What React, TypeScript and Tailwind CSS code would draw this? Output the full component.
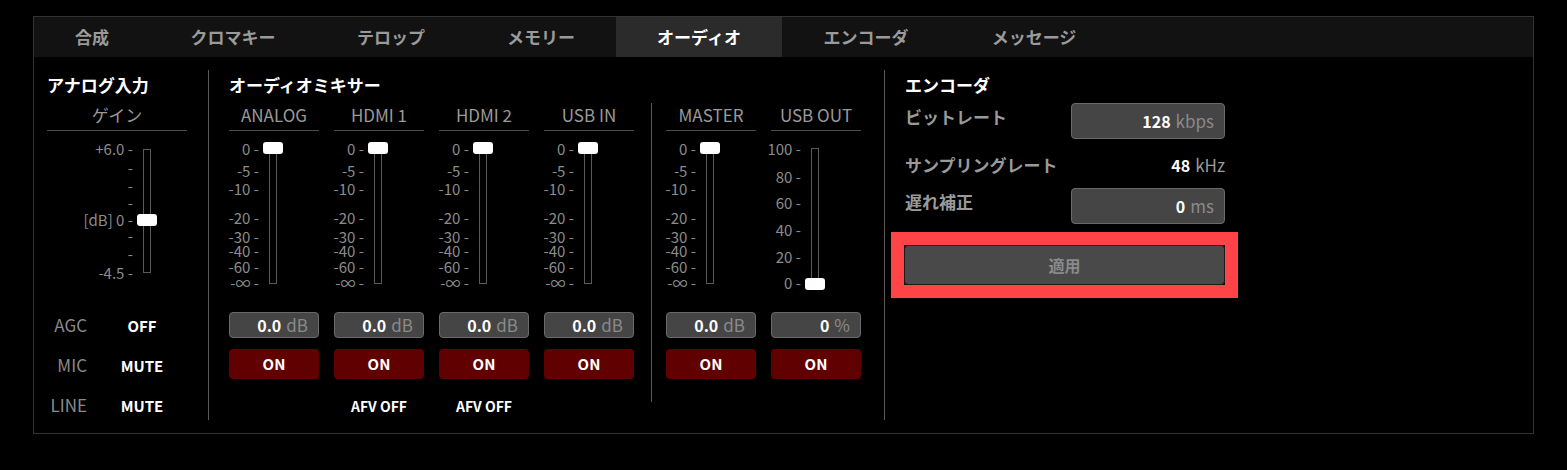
import React from "react";

type Mark = { t: string; y: number };

const TOP = 131; // page y of fader box top

const DB_MARKS: Mark[] = [
  { t: "0", y: 149 },
  { t: "-5", y: 171 },
  { t: "-10", y: 189 },
  { t: "-20", y: 218 },
  { t: "-30", y: 237 },
  { t: "-40", y: 251 },
  { t: "-60", y: 267 },
  { t: "-∞", y: 283 },
];

const PCT_MARKS: Mark[] = [
  { t: "100", y: 149 },
  { t: "80", y: 177 },
  { t: "60", y: 203 },
  { t: "40", y: 230 },
  { t: "20", y: 257 },
  { t: "0", y: 283 },
];

const GAIN_MARKS: Mark[] = [
  { t: "+6.0 -", y: 149 },
  { t: "-", y: 168 },
  { t: "-", y: 186 },
  { t: "-", y: 203 },
  { t: "[dB] 0 -", y: 220 },
  { t: "-", y: 236 },
  { t: "-", y: 254 },
  { t: "-4.5 -", y: 273 },
];

const TABS = [
  { label: "合成", w: "w-[116px]" },
  { label: "クロマキー", w: "w-[166px]" },
  { label: "テロップ", w: "w-[150px]" },
  { label: "メモリー", w: "w-[150px]" },
  { label: "オーディオ", w: "w-[166px]", active: true },
  { label: "エンコーダ", w: "w-[168px]" },
  { label: "メッセージ", w: "w-[168px]" },
];

function Fader({
  width,
  dashX,
  trackX,
  trackTop,
  trackBottom,
  thumbY,
  marks,
}: {
  width: number;
  dashX: number;
  trackX: number;
  trackTop: number;
  trackBottom: number;
  thumbY: number;
  marks: Mark[];
}) {
  return (
    <div className="relative h-[170px]" style={{ width }}>
      {marks.map((m, i) => (
        <span
          key={i}
          className="absolute whitespace-nowrap text-right text-[15px] leading-[13px] text-[#8c8c8c]"
          style={{ right: width - dashX, top: m.y - TOP - 7 }}
        >
          {m.t}
        </span>
      ))}
      <div
        className="absolute w-[8px] border border-[#5a5a5a] bg-black"
        style={{ left: trackX, top: trackTop - TOP, height: trackBottom - trackTop }}
      />
      <div
        className="absolute h-[12px] w-[20px] rounded-[3px] bg-white"
        style={{ left: trackX - 6, top: thumbY - TOP - 6 }}
      />
    </div>
  );
}

function Header({ children }: { children: React.ReactNode }) {
  return (
    <div className="flex h-[27px] items-center justify-center border-b border-[#4a4a4a] pb-[4px] text-[17px] text-[#9a9a9a]">
      {children}
    </div>
  );
}

function Channel({
  name,
  marks,
  thumbY,
  value,
  unit,
  afv,
}: {
  name: string;
  marks: Mark[];
  thumbY: number;
  value: string;
  unit: string;
  afv?: boolean;
}) {
  return (
    <div className="flex w-[90px] flex-col">
      <Header>{name}</Header>
      <Fader
        width={90}
        dashX={30}
        trackX={40}
        trackTop={148}
        trackBottom={284}
        thumbY={thumbY}
        marks={marks.map((m) => ({ t: `${m.t} -`, y: m.y }))}
      />
      <div className="mt-[11px] flex h-[26px] items-center justify-end gap-[5px] rounded-[4px] border border-[#6a6a6a] bg-[#454545] pr-[10px]">
        <span className="text-[16px] font-bold text-white">{value}</span>
        <span className="text-[17px] text-[#8a8a8a]">{unit}</span>
      </div>
      <button className="mt-[11px] flex h-[30px] items-center justify-center rounded-[4px] bg-[#610000] text-[15px] font-bold text-white">
        ON
      </button>
      {afv ? (
        <div className="mt-[17px] text-center text-[14px] font-bold leading-5 text-white">AFV OFF</div>
      ) : null}
    </div>
  );
}

function Divider() {
  return <div className="h-[350px] w-px shrink-0 bg-[#5a5a5a]" />;
}

export default function App() {
  return (
    <div className="h-[470px] w-full bg-black pl-[33px] pt-4 font-['Noto_Sans_CJK_JP','Noto_Sans',sans-serif]">
      <div className="h-[418px] w-[1501px] border border-[#333]">
        <div className="flex h-10 bg-[#121212]">
          {TABS.map((t) => (
            <div
              key={t.label}
              className={`flex items-center justify-center text-[17px] font-bold ${t.w} ${
                t.active ? "bg-[#2b2b2b] text-white" : "text-[#9a9a9a]"
              }`}
            >
              {t.label}
            </div>
          ))}
        </div>

        <div className="flex pt-[13px]">
          {/* analog input */}
          <section className="w-[174px] shrink-0 pl-[13px]">
            <div className="w-[140px]">
              <h3 className="mt-[3px] text-[17px] font-bold leading-6 text-white">アナログ入力</h3>
              <div className="mt-[7px]">
                <Header>ゲイン</Header>
              </div>
              <Fader width={140} dashX={86} trackX={96} trackTop={149} trackBottom={273} thumbY={220} marks={GAIN_MARKS} />
              {[
                ["AGC", "OFF"],
                ["MIC", "MUTE"],
                ["LINE", "MUTE"],
              ].map(([k, v], i) => (
                <div key={k} className={`flex h-[40px] items-center ${i === 0 ? "mt-[4px]" : ""}`}>
                  <span className="w-[40px] text-right text-[17px] text-[#8a8a8a]">{k}</span>
                  <span className="ml-[20px] mt-[3px] w-[70px] text-center text-[15px] font-bold text-white">{v}</span>
                </div>
              ))}
            </div>
          </section>

          <Divider />

          {/* mixer */}
          <section className="w-[675px] shrink-0 pl-[20px]">
            <h3 className="mt-[3px] text-[17px] font-bold leading-6 text-white">オーディオミキサー</h3>
            <div className="mt-[7px] flex items-start">
              <div className="flex gap-[15px]">
                <Channel name="ANALOG" marks={DB_MARKS} thumbY={148} value="0.0" unit="dB" />
                <Channel name="HDMI 1" marks={DB_MARKS} thumbY={148} value="0.0" unit="dB" afv />
                <Channel name="HDMI 2" marks={DB_MARKS} thumbY={148} value="0.0" unit="dB" afv />
                <Channel name="USB IN" marks={DB_MARKS} thumbY={148} value="0.0" unit="dB" />
              </div>
              <div className="-mt-[1px] ml-[17px] mr-[14px] h-[299px] w-px bg-[#5a5a5a]" />
              <div className="flex gap-[15px]">
                <Channel name="MASTER" marks={DB_MARKS} thumbY={148} value="0.0" unit="dB" />
                <Channel name="USB OUT" marks={PCT_MARKS} thumbY={284} value="0" unit="%" />
              </div>
            </div>
          </section>

          <Divider />

          {/* encoder */}
          <section className="pl-[20px]">
            <div className="w-[320px]">
              <h3 className="mt-[3px] text-[17px] font-bold leading-6 text-white">エンコーダ</h3>
              <div className="mt-[6px] flex h-[36px] items-start justify-between">
                <span className="mt-[2px] text-[17px] font-bold leading-6 text-[#9a9a9a]">ビットレート</span>
                <div className="flex h-[36px] w-[154px] items-center justify-end gap-[5px] rounded-[4px] border border-[#6a6a6a] bg-[#454545] pr-[10px]">
                  <span className="text-[16px] font-bold text-white">128</span>
                  <span className="text-[17px] text-[#8a8a8a]">kbps</span>
                </div>
              </div>
              <div className="mt-[14px] flex h-[24px] items-center justify-between">
                <span className="text-[17px] font-bold leading-6 text-[#9a9a9a]">サンプリングレート</span>
                <div className="flex items-center gap-[5px]">
                  <span className="text-[16px] font-bold text-white">48</span>
                  <span className="text-[17px] text-[#9a9a9a]">kHz</span>
                </div>
              </div>
              <div className="mt-[11px] flex h-[36px] items-start justify-between">
                <span className="mt-[2px] text-[17px] font-bold leading-6 text-[#9a9a9a]">遅れ補正</span>
                <div className="flex h-[36px] w-[154px] items-center justify-end gap-[5px] rounded-[4px] border border-[#6a6a6a] bg-[#454545] pr-[10px]">
                  <span className="text-[16px] font-bold text-white">0</span>
                  <span className="text-[17px] text-[#8a8a8a]">ms</span>
                </div>
              </div>
              <div className="-ml-[14px] mt-[8px] w-[347px] border-[13px] border-[#ff4447]">
                <button className="flex h-[40px] w-full items-center justify-center rounded-[4px] border border-[#1c1c1c] bg-[#494949] text-[16px] font-bold text-[#8a8a8a]">
                  適用
                </button>
              </div>
            </div>
          </section>
        </div>
      </div>
    </div>
  );
}
